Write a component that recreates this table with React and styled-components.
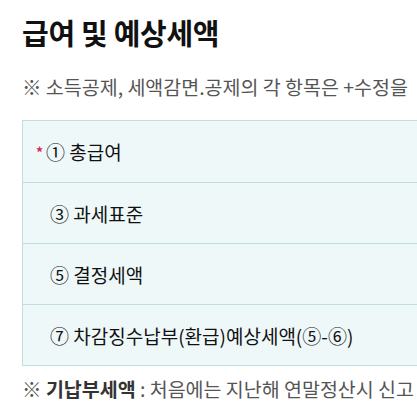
import React from 'react';
import styled, { createGlobalStyle } from 'styled-components';

const GlobalStyle = createGlobalStyle`
  body {
    margin: 0;
    background: #ffffff;
    font-family: "Noto Sans CJK KR", "Noto Sans", sans-serif;
    overflow: hidden;
  }
`;

const Page = styled.div`
  width: 417px;
  height: 417px;
  padding: 13px 0 0 22px;
  box-sizing: border-box;
  overflow: hidden;
  white-space: nowrap;
`;

const Title = styled.h2`
  margin: 0;
  font-size: 29px;
  font-weight: 700;
  color: #111;
  letter-spacing: -0.3px;
  line-height: 38px;
`;

const Note = styled.p`
  margin: 0;
  font-size: 19.5px;
  color: #555;
  line-height: 26px;
  margin-top: ${({ top }) => top}px;

  b {
    color: #333;
  }
`;

const Table = styled.div`
  margin-top: 20px;
  width: 420px;
  border: 1px solid #c2dde0;
  border-right: none;
  background: #eff8f9;
  display: flex;
  flex-direction: column;
`;

const Row = styled.div`
  height: 61px;
  display: flex;
  align-items: center;
  padding-left: ${({ required }) => (required ? 13 : 27)}px;
  font-size: 19px;
  color: #111;
  box-sizing: border-box;

  & + & {
    border-top: 1px solid #c2dde0;
  }
`;

const Star = styled.span`
  color: #e0245e;
  font-size: 14px;
  font-weight: 700;
  margin-right: 3px;
`;

const rows = [
  { label: '① 총급여', required: true },
  { label: '③ 과세표준' },
  { label: '⑤ 결정세액' },
  { label: '⑦ 차감징수납부(환급)예상세액(⑤-⑥)' },
];

const App = () => (
  <Page>
    <GlobalStyle />
    <Title>급여 및 예상세액</Title>
    <Note top={23}>※ 소득공제, 세액감면.공제의 각 항목은 +수정을</Note>
    <Table>
      {rows.map((r) => (
        <Row key={r.label} required={r.required}>
          {r.required && <Star>*</Star>}
          {r.label}
        </Row>
      ))}
    </Table>
    <Note top={10}>
      ※ <b>기납부세액</b> : 처음에는 지난해 연말정산시 신고
    </Note>
  </Page>
);

export default App;
